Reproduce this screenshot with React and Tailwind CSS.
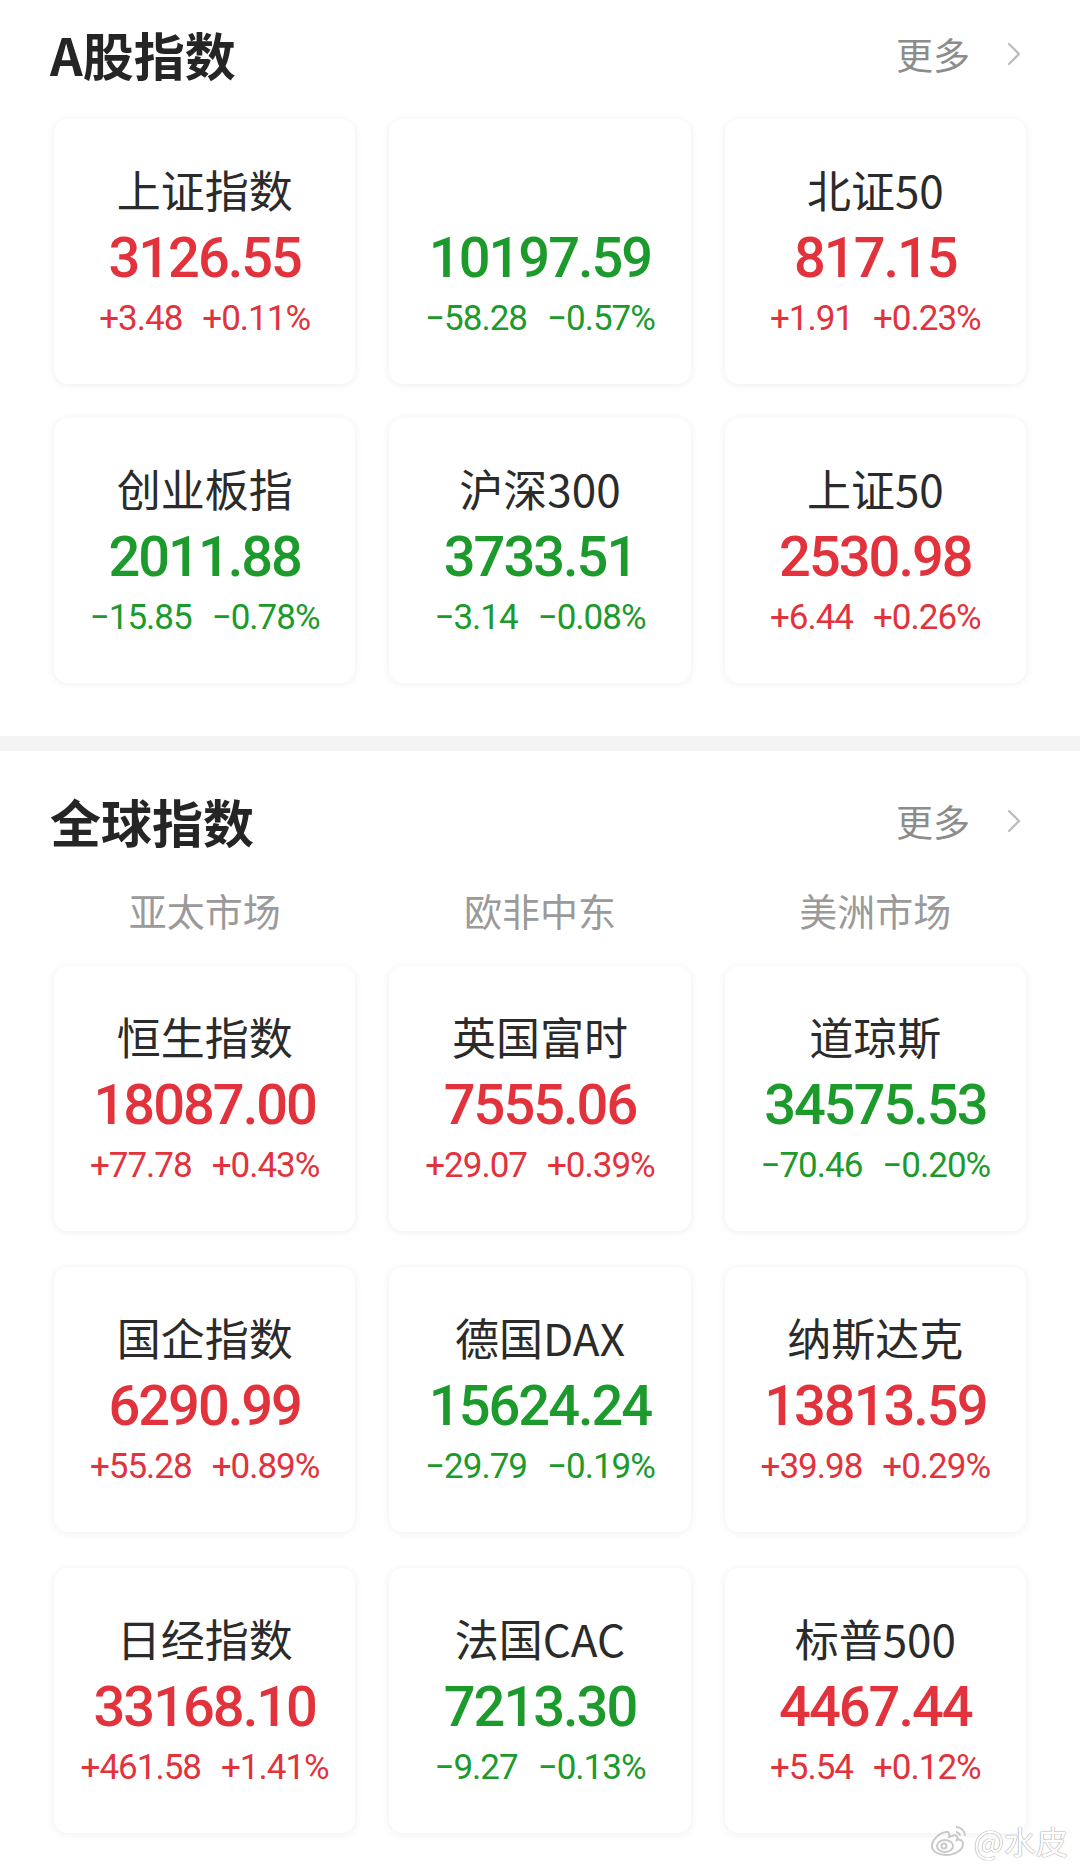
import { ChevronRight } from "lucide-react";

const aShares = [
  { name: "上证指数", value: "3126.55", chg: "+3.48", pct: "+0.11%", up: true },
  { name: "", value: "10197.59", chg: "−58.28", pct: "−0.57%", up: false },
  { name: "北证50", value: "817.15", chg: "+1.91", pct: "+0.23%", up: true },
  { name: "创业板指", value: "2011.88", chg: "−15.85", pct: "−0.78%", up: false },
  { name: "沪深300", value: "3733.51", chg: "−3.14", pct: "−0.08%", up: false },
  { name: "上证50", value: "2530.98", chg: "+6.44", pct: "+0.26%", up: true },
];

const globals = [
  { name: "恒生指数", value: "18087.00", chg: "+77.78", pct: "+0.43%", up: true },
  { name: "英国富时", value: "7555.06", chg: "+29.07", pct: "+0.39%", up: true },
  { name: "道琼斯", value: "34575.53", chg: "−70.46", pct: "−0.20%", up: false },
  { name: "国企指数", value: "6290.99", chg: "+55.28", pct: "+0.89%", up: true },
  { name: "德国DAX", value: "15624.24", chg: "−29.79", pct: "−0.19%", up: false },
  { name: "纳斯达克", value: "13813.59", chg: "+39.98", pct: "+0.29%", up: true },
  { name: "日经指数", value: "33168.10", chg: "+461.58", pct: "+1.41%", up: true },
  { name: "法国CAC", value: "7213.30", chg: "−9.27", pct: "−0.13%", up: false },
  { name: "标普500", value: "4467.44", chg: "+5.54", pct: "+0.12%", up: true },
];

const markets = ["亚太市场", "欧非中东", "美洲市场"];

const cjk = "font-['Noto_Sans_CJK_SC','Noto_Sans',sans-serif]";
const num = "font-['Roboto','Noto_Sans_CJK_SC',sans-serif]";

const SectionHeader = ({ title }) => (
  <div className="flex items-center justify-between h-[50px]">
    <h2 className={`${cjk} text-[51px] leading-[50px] font-bold text-[#252525] -ml-[4px]`}>{title}</h2>
    <div className="flex items-center gap-[34px] pr-[2px]">
      <span className={`${cjk} text-[37px] leading-[50px] text-[#8c8c8c]`}>更多</span>
      <ChevronRight size={40} strokeWidth={1.4} className="text-[#bdbdbd] -mx-[10px]" />
    </div>
  </div>
);

const IndexCard = ({ item }) => {
  const color = item.up ? "text-[#e2323c]" : "text-[#1c9a2b]";
  return (
    <div className="h-[265px] rounded-[14px] bg-white shadow-[0_1px_9px_rgba(0,0,0,0.07)] flex flex-col items-center pt-[42px]">
      <p className={`${cjk} text-[44px] leading-[56px] text-[#2b2b2b] h-[56px]`}>{item.name || "\u00a0"}</p>
      <p className={`${num} ${color} text-[56px] leading-[64px] font-medium tracking-[-2px] mt-[9px]`}>
        {item.value}
      </p>
      <p className={`${num} ${color} text-[35px] leading-[44px] mt-[7px] flex gap-[20px] tracking-[-1px]`}>
        <span>{item.chg}</span>
        <span>{item.pct}</span>
      </p>
    </div>
  );
};

const App = () => {
  return (
    <div className="relative w-[1080px] h-[1868px] bg-white overflow-hidden">
      <section className="px-[54px] pb-[53px]">
        <div className="h-[119px] flex flex-col justify-center pb-[12px]">
          <SectionHeader title="A股指数" />
        </div>
        <div className="grid grid-cols-3 gap-x-[34px] gap-y-[34px]">
          {aShares.map((item, i) => (
            <IndexCard key={i} item={item} />
          ))}
        </div>
      </section>

      <div className="h-[15px] bg-[#f4f4f4]" />

      <section className="px-[54px] pt-[45px]">
        <SectionHeader title="全球指数" />
        <div className="grid grid-cols-3 gap-x-[34px] mt-[39px]">
          {markets.map((m) => (
            <p key={m} className={`${cjk} text-center text-[38px] leading-[50px] text-[#9a9a9a]`}>
              {m}
            </p>
          ))}
        </div>
        <div className="grid grid-cols-3 gap-x-[34px] gap-y-[36px] mt-[31px]">
          {globals.map((item) => (
            <IndexCard key={item.name} item={item} />
          ))}
        </div>
      </section>

      <div className="absolute right-[12px] bottom-[8px] flex items-center gap-[4px] text-[#d2d2d2]">
        <svg width="40" height="34" viewBox="0 0 40 34" fill="none" stroke="#c9c9c9" strokeWidth="2">
          <path d="M16 9c-7 1-14 8-14 14 0 6 7 9 14 9 9 0 17-5 17-11 0-4-4-5-6-4 1-3 0-6-5-4-1 0-2 1-3 1 1-4-1-6-3-5z" />
          <ellipse cx="15" cy="23" rx="8" ry="6" />
          <circle cx="14" cy="23" r="2.5" />
          <path d="M26 4c5 0 9 4 9 9" />
          <path d="M26 9c2 0 4 2 4 4" />
        </svg>
        <span className={`${cjk} text-[32px] leading-[40px] text-white [text-shadow:0_0_1px_#aaa,0_0_1px_#aaa,0_0_1px_#aaa]`}>@水皮</span>
      </div>
    </div>
  );
};

export default App;
